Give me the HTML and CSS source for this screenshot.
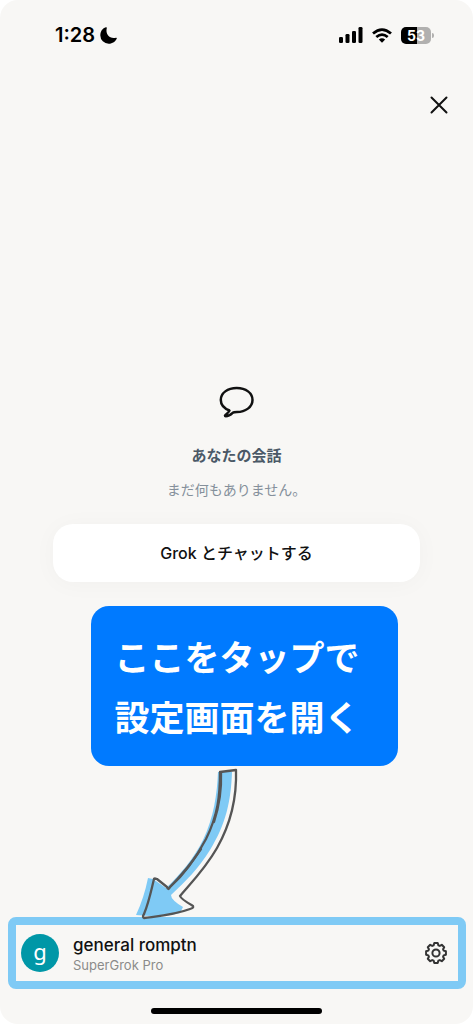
FILE: index.html
```html
<!DOCTYPE html>
<html lang="ja">
<head>
<meta charset="utf-8">
<meta name="viewport" content="width=device-width, initial-scale=1">
<title>Grok</title>
<link rel="stylesheet" href="styles.css">
</head>
<body>
<div class="screen">
  <header class="status">
    <div class="clock">
      <span>1:28</span>
      <svg class="moon" viewBox="0 0 16 16" aria-hidden="true"><path d="M5.500.3C2.500 1.200.3 4 .3 8A7.900 7.900 0 0 0 8.200 15.800C11.800 15.800 14.700 13.400 15.800 10.800C16 10.200 15.600 9.900 15 10.100C10 11.700 4.700 7.400 6.400 1C6.500.4 6.200.1 5.500.3Z"/></svg>
    </div>
    <div class="indicators">
      <svg class="signal" viewBox="0 0 24 16" aria-hidden="true"><rect x="0" y="10" width="4" height="6" rx="1.300"/><rect x="6.500" y="7" width="4" height="9" rx="1.300"/><rect x="13" y="4" width="4" height="12" rx="1.300"/><rect x="19.500" y="0" width="4" height="16" rx="1.300"/></svg>
      <svg class="wifi" viewBox="0 0 20 15" aria-hidden="true"><g fill="none" stroke="#000" stroke-width="2.800"><path d="M1 5.500Q10-2.300 19 5.500"/><path d="M4.300 9Q10 4.200 15.700 9"/></g><path d="M6.800 11.500Q10 9 13.200 11.500L10 14.800Z"/></svg>
      <div class="battery"><span class="level">53</span><i class="cap"></i></div>
    </div>
  </header>

  <div class="toolbar">
    <button class="close" type="button" aria-label="閉じる">
      <svg viewBox="0 0 18 18" aria-hidden="true"><path d="M1.500 1.500l15 15M16.500 1.500l-15 15"/></svg>
    </button>
  </div>

  <main class="empty">
    <svg class="bubble" viewBox="0 0 36 32" aria-hidden="true"><path d="M10.500 24.500C4.800 22.300 1.800 18.500 1.800 14C1.800 7 8.500 2 17.700 2S33.500 7 33.500 14S26.500 26 18 26C15.500 26 14.700 26 13.700 26.800C12 28.400 9.300 30.200 6.700 30.200C5.700 30.200 5.800 29.500 6.500 28.900C8.500 27.200 9.500 26.500 10.500 24.500Z"/></svg>
    <h1 class="title">あなたの会話</h1>
    <p class="note">まだ何もありません。</p>
    <button class="start" type="button">Grok とチャットする</button>
    <div class="callout">
      ここをタップで<br>設定画面を開く
      <svg class="arrow" viewBox="0 0 110 160" aria-hidden="true">
        <path class="arrow-fill" d="M88 6L102 6C101 35 96 58 80 84C69 102 55 116 41 129Q41 134 53 141L50 147Q33 152 6 149Q14 132 18 112L23 113L36 122C50 109 64 92 73 74C84 51 87 28 88 6Z"/>
        <path class="arrow-line" d="M90 6L106 4C107 34 100 59 87 82C75 103 61 117 50 130C51 133 58 137 63 140Q64 142 60 143C44 149 29 150 14 152Q12 151 14 148C19 136 21 125 24 113Q24 112 27 113L37 121Q38 125 40 121C55 108 67 90 76 73C88 49 90 29 90 6Z"/>
        <path class="arrow-line" d="M91 7Q92 31 84 56M39 122Q57 104 71 83"/>
      </svg>
    </div>
  </main>

  <footer class="account">
    <div class="avatar">g</div>
    <div class="who">
      <div class="name">general romptn</div>
      <div class="plan">SuperGrok Pro</div>
    </div>
    <button class="settings" type="button" aria-label="設定">
      <svg viewBox="0 0 24 24" aria-hidden="true"><circle cx="12" cy="12" r="3.600"/><path d="M10.300 2.100H13.700L14.340 4.350L15.760 4.940L17.800 3.800L20.200 6.200L19.060 8.240L19.650 9.660L21.900 10.300V13.700L19.650 14.340L19.060 15.760L20.200 17.800L17.800 20.200L15.760 19.060L14.340 19.650L13.700 21.900H10.300L9.660 19.650L8.240 19.060L6.200 20.200L3.800 17.800L4.940 15.760L4.350 14.340L2.100 13.700V10.300L4.350 9.660L4.940 8.240L3.800 6.200L6.200 3.800L8.240 4.940L9.660 4.350Z"/></svg>
    </button>
  </footer>
  <div class="home"></div>
</div>
</body>
</html>
```

FILE: styles.css
```css
* {
  box-sizing: border-box;
}

body {
  margin: 0;
  background: #fff;
  color: #111;
  font-family: Inter, "Noto Sans CJK JP", sans-serif;
}

button {
  border: 0;
  padding: 0;
  background: none;
  color: inherit;
  font: inherit;
}

svg {
  display: block;
}

.screen {
  display: flex;
  flex-direction: column;
  min-height: 100vh;
  background: #f8f7f5;
  border-radius: 18px;
}

.status {
  display: flex;
  justify-content: space-between;
  align-items: center;
  padding: 23px 42px 0 55px;
}

.clock {
  display: flex;
  align-items: center;
  gap: 5px;
  font-size: 20px;
  font-weight: 600;
  line-height: 24px;
  color: #000;
}

.moon {
  width: 17px;
  height: 17px;
}

.indicators {
  display: flex;
  align-items: center;
  gap: 9px;
}

.signal {
  width: 24px;
  height: 16px;
}

.wifi {
  width: 20px;
  height: 15px;
}

.battery {
  position: relative;
  width: 30px;
  height: 17px;
  border-radius: 5px;
  background: linear-gradient(90deg, #000 53%, #b1b0af 53%);
  color: #fff;
  font-size: 14px;
  font-weight: 700;
  line-height: 17px;
  text-align: center;
}

.cap {
  position: absolute;
  left: 31px;
  top: 6px;
  width: 2px;
  height: 5px;
  border-radius: 0 2px 2px 0;
  background: #b1b0af;
}

.toolbar {
  display: flex;
  justify-content: flex-end;
  padding: 49px 25px 0;
}

.close svg {
  width: 18px;
  height: 18px;
  fill: none;
  stroke: #111;
  stroke-width: 2;
  stroke-linecap: round;
}

.empty {
  display: flex;
  flex-direction: column;
  align-items: center;
  padding: 272px 53px 0;
}

.bubble {
  width: 36px;
  height: 32px;
  fill: none;
  stroke: #111;
  stroke-width: 2.5;
  stroke-linejoin: round;
}

.title {
  margin: 28px 0 0;
  color: #4b5967;
  font-size: 15px;
  font-weight: 700;
  line-height: 20px;
}

.note {
  margin: 14px 0 0;
  color: #85909b;
  font-size: 14px;
  font-weight: 400;
  line-height: 20px;
}

.start {
  width: 100%;
  height: 58px;
  margin-top: 24px;
  padding-bottom: 2px;
  border-radius: 20px;
  background: #fff;
  box-shadow: 0 2px 24px rgba(0, 0, 0, 0.03);
  font-size: 16px;
  font-weight: 500;
}

.callout {
  position: relative;
  z-index: 1;
  margin: 24px 0 0 16px;
  padding: 20px 38px 20px 23px;
  border-radius: 18px;
  background: #007aff;
  color: #fff;
  font-family: "Noto Sans CJK JP", sans-serif;
  font-size: 35px;
  font-weight: 700;
  line-height: 60px;
  white-space: nowrap;
}

.arrow {
  position: absolute;
  left: 39px;
  top: 100%;
  width: 110px;
  height: 160px;
}

.arrow-fill {
  fill: #7fcaf5;
}

.arrow-line {
  fill: none;
  stroke: #555;
  stroke-width: 2.3;
  stroke-linejoin: round;
  stroke-linecap: round;
}

.account {
  display: flex;
  align-items: center;
  gap: 14px;
  height: 72px;
  margin: auto 7px 0 8px;
  padding: 0 10px 0 5px;
  border: 8px solid #7fcaf5;
  border-radius: 8px;
}

.avatar {
  width: 38px;
  height: 38px;
  border-radius: 50%;
  background: #0097a7;
  color: #fff;
  font-family: "Noto Sans", sans-serif;
  font-size: 22px;
  line-height: 34px;
  text-align: center;
}

.who {
  flex: 1;
  padding-top: 3px;
}

.name {
  color: #111;
  font-size: 17px;
  font-weight: 500;
  line-height: 21px;
}

.plan {
  color: #8b8b8a;
  font-size: 13px;
  line-height: 19px;
}

.settings svg {
  width: 24px;
  height: 24px;
  fill: none;
  stroke: #333;
  stroke-width: 2;
  stroke-linejoin: round;
}

.home {
  width: 36%;
  height: 6px;
  margin: 19px auto 10px;
  border-radius: 3px;
  background: #000;
}
```
